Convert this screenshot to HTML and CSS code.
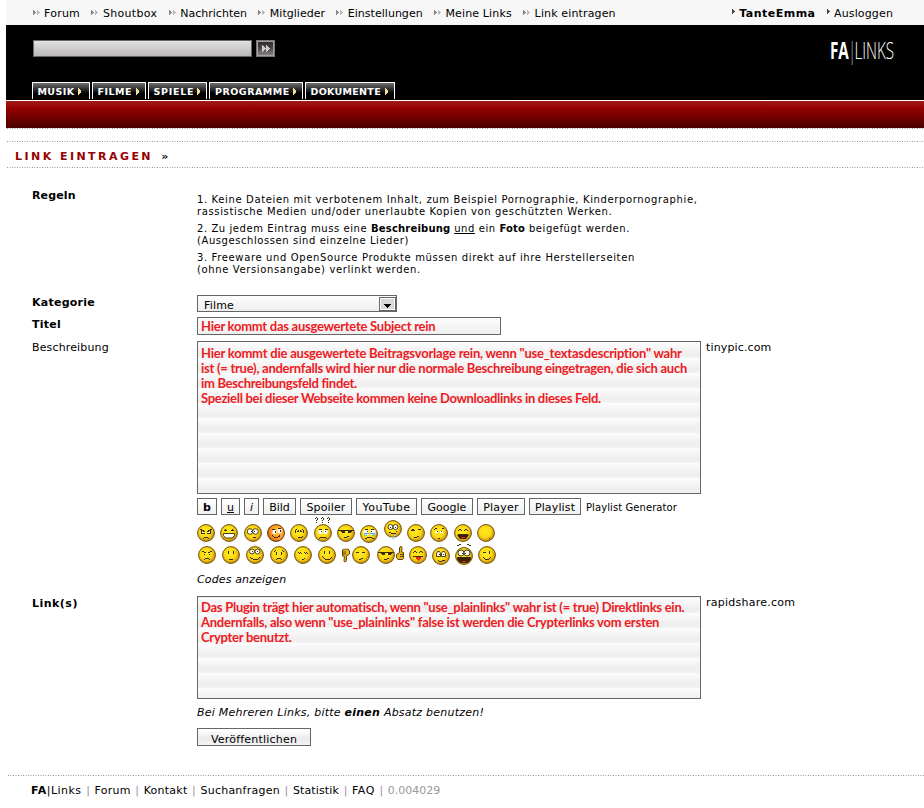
FILE: index.html
```html
<!DOCTYPE html>
<html lang="de">
<head>
<meta charset="utf-8">
<title>FA|Links - Link eintragen</title>
<link rel="stylesheet" href="styles.css">
</head>
<body>
<svg class="defs" width="0" height="0">
  <defs>
    <radialGradient id="gold" cx=".45" cy=".42" r=".58"><stop offset="0" stop-color="#ffec22"/><stop offset=".6" stop-color="#fbd914"/><stop offset="1" stop-color="#c58a0c"/></radialGradient>
    <radialGradient id="orange" cx=".65" cy=".4" r=".7"><stop offset="0" stop-color="#ffc83c"/><stop offset=".6" stop-color="#ff9c20"/><stop offset="1" stop-color="#d05a10"/></radialGradient>
  </defs>
  <symbol id="ball" viewBox="0 0 18 18"><circle cx="9" cy="9" r="8.4" fill="url(#gold)" stroke="#70500c"/></symbol>
  <symbol id="arrows" viewBox="0 0 8 5"><path d="M0 0h1v1h1v1h1v1H2v1H1v1H0z" fill="#888"/><path d="M4 0h1v1h1v1h1v1H6v1H5v1H4z" fill="#bbb"/></symbol>
  <symbol id="arrow" viewBox="0 0 3 5"><path d="M0 0h1v1h1v1h1v1H2v1H1v1H0z" fill="currentColor"/></symbol>
  <symbol id="tabarrow" viewBox="0 0 3 7"><path d="M0 0h1v1h1v1h1v3H2v1H1v1H0z" fill="#f4dfa0"/></symbol>
  <symbol id="thumb" viewBox="0 0 8 14"><path class="hand" d="M3.500 6.500V2q.3-1.500 1.500-1.500T6 2.500L5.500 6l2 .500v6l-1 1H2l-1.500-2v-3z"/><path class="fingers" d="M4 8.500h3M4 10.500h3"/></symbol>
</svg>

<header>
  <nav class="topbar">
    <a class="s2"><svg><use href="#arrows"/></svg>Forum</a>
    <a class="s3"><svg><use href="#arrows"/></svg>Shoutbox</a>
    <a class="s0"><svg><use href="#arrows"/></svg>Nachrichten</a>
    <a class="s0"><svg><use href="#arrows"/></svg>Mitglieder</a>
    <a class="s0"><svg><use href="#arrows"/></svg>Einstellungen</a>
    <a class="s1"><svg><use href="#arrows"/></svg>Meine Links</a>
    <a class="s1"><svg><use href="#arrows"/></svg>Link eintragen</a>
    <div class="user">
      <a class="s4"><svg><use href="#arrow"/></svg><b>TanteEmma</b></a>
      <a class="s1"><svg><use href="#arrow"/></svg>Ausloggen</a>
    </div>
  </nav>
  <div class="banner">
    <div class="banner-top">
      <form class="search">
        <input type="text" class="query">
        <button type="button" class="go"><svg viewBox="0 0 8 7"><path d="M0 0h1v1h1v1h1v1h1v1H3v1H2v1H1v1H0zM4 0h1v1h1v1h1v1h1v1H7v1H6v1H5v1H4z" fill="#d0ccce"/></svg></button>
      </form>
      <div class="logo"><b>FA</b><i></i><span>LINKS</span></div>
    </div>
    <ul class="tabs">
      <li class="t-musik">MUSIK<svg><use href="#tabarrow"/></svg></li>
      <li class="t-filme">FILME<svg><use href="#tabarrow"/></svg></li>
      <li class="t-spiele">SPIELE<svg><use href="#tabarrow"/></svg></li>
      <li class="t-programme">PROGRAMME<svg><use href="#tabarrow"/></svg></li>
      <li class="t-dokumente">DOKUMENTE<svg><use href="#tabarrow"/></svg></li>
    </ul>
  </div>
  <div class="red"></div>
  <div class="dots"></div>
</header>

<div class="dots title-top"></div>
<h1>LINK EINTRAGEN <span>»</span></h1>
<div class="dots"></div>

<main>
  <div class="row r-rules">
    <label class="s1">Regeln</label>
    <div class="rules">
      <p>1. Keine Dateien mit verbotenem Inhalt, zum Beispiel Pornographie, Kinderpornographie,<br>rassistische Medien und/oder unerlaubte Kopien von geschützten Werken.</p>
      <p>2. Zu jedem Eintrag muss eine <b>Beschreibung</b> <u>und</u> ein <b>Foto</b> beigefügt werden.<br>(Ausgeschlossen sind einzelne Lieder)</p>
      <p>3. Freeware und OpenSource Produkte müssen direkt auf ihre Herstellerseiten<br>(ohne Versionsangabe) verlinkt werden.</p>
    </div>
  </div>
  <div class="row r-cat">
    <label class="s2">Kategorie</label>
    <div class="select field"><span>Filme</span><i class="drop"><svg viewBox="0 0 7 4"><path d="M0 0h7v1H6v1H5v1H4v1H3V3H2V2H1V1H0z"/></svg></i></div>
  </div>
  <div class="row r-title">
    <label class="s2">Titel</label>
    <div class="field input red-text">Hier kommt das ausgewertete Subject rein</div>
  </div>
  <div class="row r-desc">
    <label class="plain s1">Beschreibung</label>
    <div>
      <div class="field area desc red-text"><span class="loose">Hier kommt die ausgewertete Beitragsvorlage rein, wenn "use_textasdescription" wahr</span><br>ist (= true), andernfalls wird hier nur die normale Beschreibung eingetragen, die sich auch<br><span class="tight">im Beschreibungsfeld findet.</span><br><span class="tight">Speziell bei dieser Webseite kommen keine Downloadlinks in dieses Feld.</span></div>
      <div class="codes">
        <button type="button" class="w20"><b>b</b></button>
        <button type="button" class="w19"><u>u</u></button>
        <button type="button" class="w15"><i>i</i></button>
        <button type="button" class="w33">Bild</button>
        <button type="button" class="w52 s1">Spoiler</button>
        <button type="button" class="w61 s4">YouTube</button>
        <button type="button" class="w52">Google</button>
        <button type="button" class="w48 s2">Player</button>
        <button type="button" class="w52 s1">Playlist</button>
        <span class="gen">Playlist Generator</span>
      </div>
      <div class="smileys first">
        <svg viewBox="0 0 18 18"><use href="#ball"/><path d="M5 8.500h2M11 8.500h2" class="w"/><path d="M3 5.500h2M4 6.500h3M6 7.500h2M15 5.500h-2M14 6.500h-3M12 7.500h-2M4 9.500h4M10 9.500h4M4.500 7v2M13.500 7v2M7 13.500h4M6 14.500h1M11 14.500h1"/></svg>
        <svg viewBox="0 0 18 18"><use href="#ball"/><path d="M4 6.500h3M11 6.500h3M5 5.500h1M12 5.500h1"/><path d="M3.500 9.500h11v2l-2 2.500h-7l-2-2.500z" class="w k"/></svg>
        <svg viewBox="0 0 18 18"><use href="#ball"/><circle cx="6" cy="7.500" r="2.800" class="w k"/><circle cx="11.500" cy="7.500" r="2.800" class="w k"/><path d="M7 7.500h1M10 7.500h1M9 13.500h3"/></svg>
        <svg viewBox="0 0 18 18"><circle cx="9" cy="9" r="8.400" fill="url(#orange)" stroke="#5a2c08"/><path d="M6 6.500h3v3H6zM11 5.500h3v3h-3z" class="w"/><path d="M5 5.500h3M11 4.500h3M8.500 7v2M13.500 6v2M5 11.500h1M6 12.500h1M7 13.500h4M11 12.500h2M12 11.500h1"/></svg>
        <svg viewBox="0 0 18 18"><use href="#ball"/><path d="M5.500 6v3M6 5.500h1M7 7.500h1M8.500 6v2M10.500 6v2M11 7.500h1M13.500 6v3M12 5.500h1M8 13.500h4M12 12.500h1"/></svg>
        <svg viewBox="0 0 18 18"><path d="M1 -5.500h1M2 -6.500h1M3.500 -6v2M2 -3.500h1M2 -1.500h1M7 -5.500h1M8 -6.500h1M9.500 -6v2M8 -3.500h1M8 -1.500h1M13 -5.500h1M14 -6.500h1M15.500 -6v2M14 -3.500h1M14 -1.500h1"/><use href="#ball"/><path d="M5 6.500h3v3H5zM10 6.500h3v3h-3z" class="w"/><path d="M5 5.500h3M11 5.500h3M7 7.500h1M11 7.500h1M6 13.500h6M5 14.500h1M12 14.500h1"/></svg>
        <svg viewBox="0 0 18 18"><use href="#ball"/><path d="M1 6.500h16M4 7.500h4M11 7.500h4M5 8.500h3M11 8.500h3M7 13.500h3M10 12.500h2"/></svg>
        <svg viewBox="0 -1 18 18"><use href="#ball" width="18" height="18"/><path d="M4 5.500h4v4H4zM11 5.500h4v4h-4z" class="w"/><path d="M4 8.500h5M10 8.500h5M4 10h3M12 10h3" class="tear"/><path d="M5 4.500h3M11 4.500h3M7 6.500h1M11 6.500h1M5 13.500h2M7 12.500h5M12 13.500h2"/></svg>
        <svg viewBox="0 4 18 18"><use href="#ball" width="18" height="18"/><circle cx="6.500" cy="7" r="2.500" class="w k"/><circle cx="11.500" cy="7" r="2.500" class="w k"/><path d="M6 7.500h1M11 7.500h1M5 12.500h2M7 13.500h5M12 11.500h1"/><path d="M6 17.500h6M8 18.500h3M10 15.500h2" class="drool"/></svg>
        <svg viewBox="0 0 18 18"><use href="#ball"/><path d="M4 6.500h4M5 5.500h2M11 5.500h3M7 13.500h3M10 12.500h2"/></svg>
        <svg viewBox="0 0 18 18"><use href="#ball"/><path d="M5 7.500h3M10 7.500h3M5 8.500h3M10 8.500h3" class="w"/><path d="M4 5.500h1M5 4.500h2M12 4.500h2M7 7.500h1M11 7.500h1M8 14.500h2"/></svg>
        <svg viewBox="0 0 18 18"><use href="#ball"/><path d="M5 5.500h2M4 6.500h1M7 6.500h1M11 5.500h2M10 6.500h1M13 6.500h1"/><path d="M4 10.500h10v1l-2 3H6l-2-3z" class="mouth"/><path d="M7 13.500h4" class="tongue"/></svg>
        <svg viewBox="0 0 18 18"><use href="#ball"/><path d="M12 14.500h1"/></svg>
      </div>
      <div class="smileys">
        <svg viewBox="0 0 18 18"><use href="#ball"/><path d="M4 5.500h2M6 6.500h2M14 5.500h-2M12 6.500h-2M6 8.500h1M11 8.500h1M7 12.500h4M6 13.500h1M11 13.500h1"/></svg>
        <svg viewBox="0 0 18 18"><use href="#ball"/><path d="M6.500 5v3M11.500 5v3M7 13.500h4"/></svg>
        <svg viewBox="0 0 18 18"><use href="#ball"/><circle cx="6" cy="5.500" r="2.500" class="w k"/><circle cx="11.500" cy="5.500" r="2.500" class="w k"/><path d="M6 5.500h1M11 5.500h1M4 11.500h1M5 12.500h2M7 13.500h5M12 12.500h1M13 11.500h1"/></svg>
        <svg viewBox="0 0 18 18"><use href="#ball"/><path d="M4 5.500h1M5 4.500h1M12 4.500h1M13 5.500h1M6.500 6v3M11.500 6v3M7 12.500h4M6 13.500h1M11 13.500h1"/></svg>
        <svg viewBox="0 0 18 18"><use href="#ball"/><path d="M4 6.500h1M5 7.500h1M6 6.500h1M7 7.500h1M10 6.500h1M11 7.500h1M12 6.500h1M13 7.500h1M8 13.500h2M10 12.500h1"/></svg>
        <svg viewBox="0 0 18 18"><use href="#ball"/><path d="M6.500 5v3M11.500 5v3M4 10.500h1M5 11.500h1M6 12.500h1M7 13.500h5M12 12.500h1M13 11.500h1"/></svg>
        <svg viewBox="0 0 28 18" class="wide"><g transform="rotate(180 4 9.500)"><use href="#thumb" x="0" y="2.500" width="8" height="14"/></g><use href="#ball" x="10" width="18" height="18"/><path d="M14 6.500h3M20 6.500h3M17 13.500h2M19 12.500h2"/></svg>
        <svg viewBox="0 0 28 18" class="wide last-wide"><use href="#ball" width="18" height="18"/><path d="M1 6.500h16M4 7.500h4M11 7.500h4M5 8.500h3M11 8.500h3M7 13.500h3M10 12.500h2"/><use href="#thumb" x="19" y="0" width="8" height="14"/></svg>
        <svg viewBox="0 0 18 18" class="near"><use href="#ball"/><path d="M5 5.500h2M4 6.500h1M7 6.500h1M11 5.500h2M10 6.500h1M13 6.500h1M4 10.500h10"/><path d="M7 11.500h5M7 12.500h5M8 13.500h3M9 14.500h1" class="tongue"/></svg>
        <svg viewBox="0 -1 18 18" class="near"><use href="#ball" width="18" height="18"/><path d="M5.500 4.500h2l1 2v3h-4v-3zM10.500 4.500h2l1 2v3h-4v-3z" class="w k"/><path d="M7 7.500h1M11 7.500h1M6 13.500h1M7 14.500h3M10 13.500h3"/></svg>
        <svg viewBox="0 -1 18 18" class="near"><use href="#ball" width="18" height="18"/><path d="M2 -1.500h2M4 -2.500h2M12 -2.500h2M14 -1.500h2"/><circle cx="6" cy="6" r="3" class="w k"/><circle cx="12" cy="6" r="3" class="w k"/><path d="M7 6.500h1M10 6.500h1"/><path d="M2.500 10.500h13v2l-3 3h-7l-3-3z" class="mouth"/><path d="M7 14.500h4" class="tongue"/></svg>
        <svg viewBox="0 0 18 18"><use href="#ball"/><path d="M5 6.500h3M11.500 5v3M5 11.500h1M6 12.500h1M7 13.500h4M11 12.500h1M12 11.500h1"/></svg>
      </div>
      <p class="note s1">Codes anzeigen</p>
    </div>
    <span class="hint s1">tinypic.com</span>
  </div>
  <div class="row r-links">
    <label class="s4">Link(s)</label>
    <div>
      <div class="field area links red-text">Das Plugin trägt hier automatisch, wenn "use_plainlinks" wahr ist (= true) Direktlinks ein.<br>Andernfalls, also wenn "use_plainlinks" false ist werden die Crypterlinks vom ersten<br>Crypter benutzt.</div>
      <p class="note s2">Bei Mehreren Links, bitte <b>einen</b> Absatz benutzen!</p>
      <button type="button" class="submit">Veröffentlichen</button>
    </div>
    <span class="hint s2">rapidshare.com</span>
  </div>
</main>

<div class="dots foot-line"></div>
<footer>
  <span class="s4"><b>FA</b>|Links</span><i>|</i><span class="s2">Forum</span><i>|</i><span class="s2">Kontakt</span><i>|</i><span class="s2">Suchanfragen</span><i>|</i><span class="s1">Statistik</span><i>|</i><span class="s4">FAQ</span><i>|</i><span class="time">0.004029</span>
</footer>
</body>
</html>
```
FILE: styles.css
```css
* { box-sizing: border-box; }
body { margin: 0 0 0 6px; background: #fff; color: #000; font: 11px/14px "DejaVu Sans", sans-serif; overflow: hidden; }
p, h1, ul { margin: 0; padding: 0; }
.defs { display: block; }

.s0 { letter-spacing: .02px; }
.s1 { letter-spacing: .14px; }
.s2 { letter-spacing: .24px; }
.s3 { letter-spacing: .33px; }
.s4 { letter-spacing: .48px; }

.topbar { display: flex; gap: 11.300px; height: 25px; padding: 0 31px 0 26.500px; background: #f7f7f7; line-height: 28px; }
.topbar a { display: flex; align-items: center; height: 28px; white-space: nowrap; }
.topbar svg { width: 8px; height: 5px; margin: -3px 3.500px 0 0; shape-rendering: crispEdges; }
.user { display: flex; gap: 11px; margin-left: auto; }
.user svg { width: 3px; height: 5px; margin: -5px 4.500px 0 0; color: #444; }

.banner { display: flex; flex-direction: column; justify-content: space-between; height: 76px; padding: 15px 30px 1px 26px; background: #000; border-bottom: 1px solid #fff; }
.banner-top { display: flex; justify-content: space-between; align-items: flex-start; }
.search { display: flex; gap: 4px; margin-left: 1px; }
.query { width: 219px; height: 17px; padding: 0; border: 1px solid #666; background: linear-gradient(#e2e0e1, #bab8b9); }
.go { display: flex; align-items: center; justify-content: center; width: 19px; height: 17px; padding: 0; border: 1px solid #777; background: linear-gradient(#2c2628, #4a4446 45%, #8e888a); box-shadow: inset 0 0 0 1px #a5a1a3; }
.go svg { width: 8px; height: 7px; shape-rendering: crispEdges; }
.logo { display: flex; height: 31px; margin-top: -5px; color: #fff; font: 300 23px/31px "Open Sans", sans-serif; transform: scaleX(.66); transform-origin: 100% 0; }
.logo b { font-weight: bold; }
.logo i { width: 1.500px; height: 24px; margin: 6px 3px 0 4px; background: #bbb; }
.tabs { display: flex; gap: 2px; list-style: none; color: #fff; font: bold 9.500px/17px "DejaVu Sans", sans-serif; }
.tabs li { display: flex; align-items: center; justify-content: space-between; height: 17px; padding: 0 8px 0 4.500px; border: solid #fff; border-width: 1px 1px 0; background: linear-gradient(#707070, #000 65%); }
.tabs svg { flex: none; width: 3px; height: 7px; shape-rendering: crispEdges; }
.t-musik { width: 58px; letter-spacing: .42px; }
.t-filme { width: 54px; letter-spacing: .49px; }
.t-spiele { width: 59px; letter-spacing: .7px; }
.t-programme { width: 94px; letter-spacing: .5px; }
.t-dokumente { width: 90px; letter-spacing: .3px; }
.tabs .t-spiele, .tabs .t-dokumente, .tabs .t-filme { padding-right: 6px; }
.tabs .t-programme { padding-left: 5px; padding-right: 6px; }
.red { height: 27px; background: linear-gradient(#a01c1c, #980000 25%, #480000); }
.dots { height: 1px; margin-left: 1px; background: repeating-linear-gradient(90deg, #999 0 1px, #fff 1px 2px, #ccc 2px 4px, #fff 4px 5px); }
.title-top { margin-top: 12px; }

h1 { height: 25px; padding-left: 9px; font: bold 11px/29px "DejaVu Sans", sans-serif; letter-spacing: 2.450px; color: #980000; }
h1 span { margin-left: 2px; color: #111; }

main { padding-left: 26px; }
.row { display: grid; grid-template-columns: 165px 504px auto; align-items: start; }
label { padding-top: 1px; font-weight: bold; }
label.plain { padding-top: 0; font-weight: normal; }
.r-rules { padding-top: 20px; height: 127px; }
.rules { width: 520px; padding-top: 6px; font-size: 10px; line-height: 12px; letter-spacing: .63px; white-space: nowrap; }
.rules b { letter-spacing: .2px; }
.rules p { margin-bottom: 5px; }
.rules p:nth-child(2) { letter-spacing: .57px; }
.r-cat { height: 22px; }
.r-title { height: 24px; }

.field { border: 1px solid #666; background: repeating-linear-gradient(#fdfdfd 0, #efedee 11px, #f3f2f3 15px) 0 1px; }
.select { display: flex; justify-content: space-between; width: 200px; height: 17px; padding-left: 6px; background: linear-gradient(#fdfdfd, #eee); line-height: 19px; letter-spacing: .17px; }
.drop { display: flex; align-items: center; justify-content: center; width: 17px; margin: 1px 0 0; border: 1px solid #666; background: #d8d8d8; box-shadow: inset 0 0 0 1px #fff; }
.drop svg { width: 7px; height: 4px; margin-top: 4px; shape-rendering: crispEdges; }
.red-text { color: #ed1c24; font: bold 13px/15px Lato, sans-serif; letter-spacing: -.260px; white-space: nowrap; }
.loose { letter-spacing: -.220px; }
.tight { letter-spacing: -.300px; }
.input { width: 304px; height: 18px; padding: 1px 3px; background: linear-gradient(#fdfdfd, #eee); }
.area { width: 504px; padding: 3px; }
.desc { height: 153px; padding-top: 4px; }
.links { height: 103px; }
.hint { padding-left: 5px; white-space: nowrap; }
.r-desc { height: 255px; }

button { font: inherit; }
.codes { display: flex; gap: 4px; margin-top: 4px; height: 17px; }
.codes button { height: 17px; padding: 0; border: 1px solid #666; background: linear-gradient(#fff, #efefef); color: #000; line-height: 17px; }
.w15 { width: 15px; } .w19 { width: 19px; } .w20 { width: 20px; } .w33 { width: 33px; }
.w48 { width: 48px; } .w52 { width: 52px; } .w61 { width: 61px; }
.codes .s1 { letter-spacing: .14px; }
.codes .s2 { letter-spacing: .24px; }
.codes .s4 { letter-spacing: .48px; }
.gen { padding-left: 1px; font-size: 10px; line-height: 20px; letter-spacing: .08px; white-space: nowrap; }

.smileys { display: flex; gap: 6px; height: 18px; margin: 4px 0 0 .500px; }
.smileys.first { gap: 5.350px; margin: 9px 0 0; }
.smileys svg { flex: none; width: 18px; height: 18px; overflow: visible; }
.smileys .wide { width: 28px; margin: 0 1px 0 0; }
.smileys .last-wide { margin: 0 -2px 0 0; }
.smileys .near { margin-right: -1px; }
.smileys path { fill: none; stroke: #3a2a06; }
.smileys path.w { fill: #fff; stroke: #fff; }
.smileys .k { fill: #fff; stroke: #3a2a06; stroke-width: .900px; }
.smileys path.k { stroke: #3a2a06; }
.smileys path.mouth { fill: #3a1c08; }
.smileys path.tongue { stroke: #ee2a1c; }
.smileys path.tear { stroke: #4fa8d8; }
.smileys path.drool { stroke: #a9d4ee; }
.hand { fill: #e8b818; stroke: #5c430a; }
.fingers { stroke: #5c430a; }
.note { font-style: italic; line-height: 14px; white-space: nowrap; }
.r-desc .note { margin-top: 9px; }
.r-links .note { margin-top: 7px; }
.submit { display: block; width: 114px; height: 18px; margin-top: 8px; padding: 0; border: 1px solid #666; background: linear-gradient(#fff 10%, #eaeaea 60%, #f4f4f4); color: #000; line-height: 21px; letter-spacing: .2px; }

.foot-line { margin-top: 29px; margin-left: 2px; }
footer { display: flex; padding: 8px 0 0 25px; white-space: nowrap; }
footer i { width: 13px; text-align: center; font-style: normal; color: #a58ba5; }
.time { color: #999; }
```
